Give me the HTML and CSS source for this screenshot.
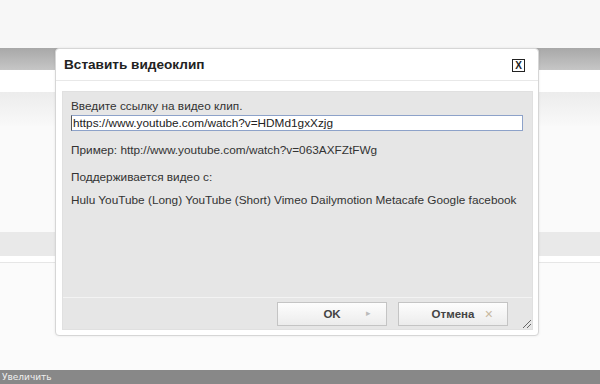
FILE: index.html
```html
<!DOCTYPE html>
<html lang="ru">
<head>
  <meta charset="UTF-8" />
  <title>Вставить видеоклип</title>
  <link rel="stylesheet" href="styles.css">
</head>
<body>

  <div class="page">
    <div class="strip-top"></div>
    <div class="strip-toolbar"></div>
    <div class="strip-white"></div>
    <div class="strip-soft"></div>
    <div class="strip-blank"></div>
    <div class="strip-row"></div>
    <div class="strip-rest"></div>
    <div class="zoom-bar">Увеличить</div>
  </div>

  <div class="dialog">
    <div class="dialog-head">
      <h2 class="dialog-title">Вставить видеоклип</h2>
      <span class="dialog-close">X</span>
    </div>

    <div class="dialog-panel">
      <div class="dialog-body">
        <label class="field-label" for="video-url">Введите ссылку на видео клип.</label>
        <input class="field-input" id="video-url" type="text" value="https://www.youtube.com/watch?v=HDMd1gxXzjg">
        <p class="hint">Пример: http://www.youtube.com/watch?v=063AXFZtFWg</p>
        <p class="hint hint-title">Поддерживается видео с:</p>
        <p class="hint hint-list">Hulu YouTube (Long) YouTube (Short) Vimeo Dailymotion Metacafe Google facebook</p>
      </div>

      <div class="dialog-foot">
        <button class="btn">OK<span class="btn-icon">&#9656;</span></button>
        <button class="btn">Отмена<span class="btn-icon btn-x">&#215;</span></button>
        <span class="grip"></span>
      </div>
    </div>
  </div>

</body>
</html>
```

FILE: styles.css
```css
body {
  margin: 0;
  font-family: "Liberation Sans", Arial, sans-serif;
  color: #333;
  background-color: #fafafa;
}

.page {
  width: 600px;
  height: 384px;
  display: flex;
  flex-direction: column;
}

.strip-top {
  height: 48px;
  background-color: #f7f7f7;
}

.strip-toolbar {
  height: 22px;
  background: linear-gradient(#a8a8a8, #c6c6c6);
}

.strip-white {
  height: 22px;
  background-color: #fff;
}

.strip-soft {
  height: 34px;
  background: linear-gradient(#ececec, #f9f9f9);
}

.strip-blank {
  height: 106px;
  background-color: #fafafa;
}

.strip-row {
  height: 24px;
  background-color: #e9e9e9;
  border-bottom: 6px solid #fff;
}

.strip-rest {
  flex: 1;
  background-color: #fbfbfb;
  border-top: 1px solid #e6e6e6;
}

.zoom-bar {
  height: 14px;
  background-color: #888;
  color: #f0f0f0;
  font-family: "DejaVu Sans", sans-serif;
  font-size: 9px;
  line-height: 14px;
  padding-left: 2px;
}

/* dialog sits over the page */
.dialog {
  position: absolute;
  left: 55px;
  top: 48px;
  width: 482px;
  height: 286px;
  background-color: #fff;
  border: 1px solid #d6d6d6;
  border-radius: 4px;
  box-shadow: 0 0 3px rgba(0,0,0,0.08);
  display: flex;
  flex-direction: column;
}

.dialog-head {
  height: 31px;
  border-bottom: 1px solid #e8e8e8;
  display: flex;
  align-items: center;
  justify-content: space-between;
  padding: 0 13px 0 8px;
}

.dialog-title {
  margin: 0;
  font-size: 13.6px;
  font-weight: bold;
  color: #222;
}

.dialog-close {
  width: 11px;
  height: 11px;
  border: 1px solid #222;
  font-size: 10px;
  font-weight: bold;
  line-height: 11px;
  text-align: center;
  color: #222;
  margin-top: 2px;
}

.dialog-panel {
  margin: 10px 5px 5px 6px;
  flex: 1;
  background-color: #e6e6e6;
  border: 1px solid #e0e0e0;
  display: flex;
  flex-direction: column;
}

.dialog-body {
  flex: 1;
  padding: 7px 0 0 8px;
  font-size: 11.8px;
  border-bottom: 1px solid #f3f3f3;
}

.field-label {
  display: block;
  line-height: 14px;
}

.field-input {
  display: block;
  box-sizing: border-box;
  width: 452px;
  height: 16px;
  margin: 2px 0 0 0;
  padding: 0 1px;
  border: 1px solid #8da2c9;
  border-left-color: #555;
  font-family: "Liberation Sans", Arial, sans-serif;
  font-size: 11.8px;
  color: #222;
  background-color: #fff;
}

.hint {
  margin: 12px 0 0 0;
  line-height: 14px;
  white-space: nowrap;
}

.hint-title {
  margin-top: 13px;
}

.hint-list {
  margin-top: 9px;
}

.dialog-foot {
  height: 31px;
  display: flex;
  align-items: center;
  justify-content: flex-end;
  gap: 11px;
  padding-right: 24px;
  position: relative;
}

.btn {
  position: relative;
  width: 110px;
  height: 24px;
  border: 1px solid #c4c4c4;
  background: linear-gradient(#fdfdfd, #ececec);
  font-family: "Liberation Sans", Arial, sans-serif;
  font-size: 11.5px;
  font-weight: bold;
  color: #444;
  text-align: center;
  padding: 0;
}

.btn-icon {
  position: absolute;
  right: 15px;
  top: 5px;
  font-size: 9px;
  color: #bbb;
  font-weight: normal;
}

.btn-x {
  top: 3px;
  right: 14px;
  font-size: 14px;
  color: #c8b8a0;
}

.grip {
  position: absolute;
  right: 1px;
  bottom: 1px;
  width: 10px;
  height: 10px;
  background: repeating-linear-gradient(135deg, transparent 0 2px, #666 2px 3px);
  clip-path: polygon(100% 0, 100% 100%, 0 100%);
}
```
